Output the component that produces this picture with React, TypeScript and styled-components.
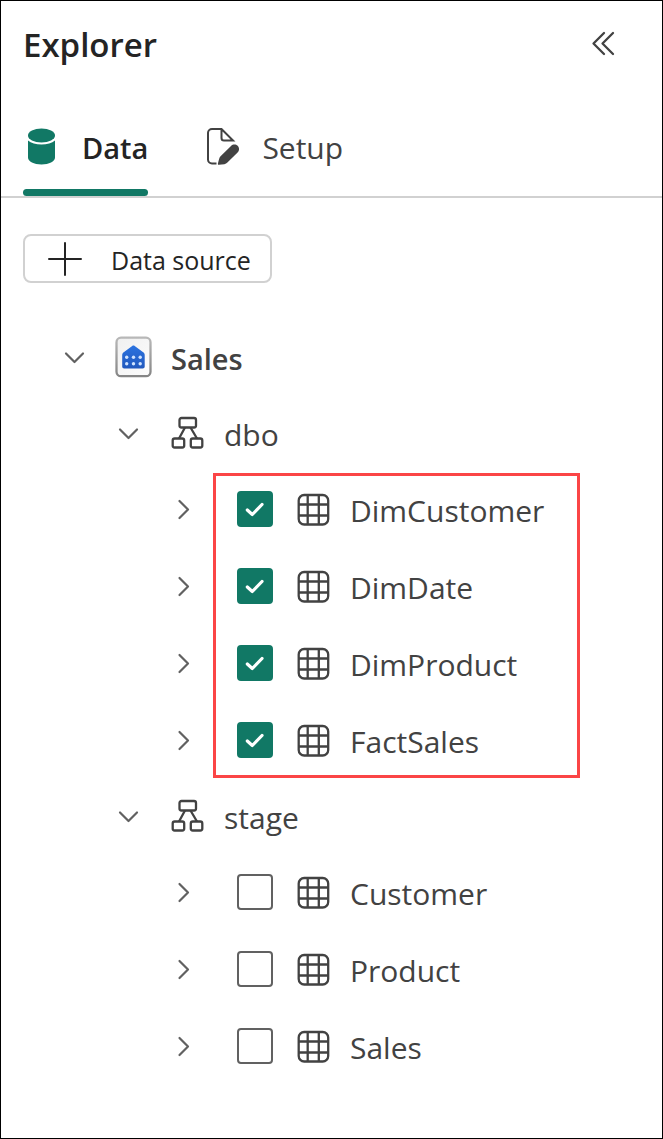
import React, { useState } from 'react';
import styled, { createGlobalStyle } from 'styled-components';

const GlobalStyle = createGlobalStyle`
  * { box-sizing: border-box; }
  body {
    margin: 0;
    background: #fff;
    color: #424242;
    font-family: "Segoe UI", "Open Sans", "Noto Sans", sans-serif;
    font-size: 30px;
    line-height: 40px;
  }
  button { font: inherit; color: inherit; background: none; border: 0; padding: 0; cursor: pointer; }
  ul { list-style: none; margin: 0; padding: 0; }
  svg { display: block; flex: none; }
`;

const Panel = styled.aside`
  min-height: 100vh;
  border: 1px solid #000;
`;

const Header = styled.header`
  display: flex;
  align-items: center;
  justify-content: space-between;
  height: 88px;
  margin-bottom: 9px;
  padding: 0 41px 4px 22px;
`;

const Title = styled.h1`
  margin: 0;
  padding-top: 4px;
  color: #242424;
  font-size: 33px;
  font-weight: 600;
`;

const TabBar = styled.div`
  display: flex;
  gap: 55px;
  height: 100px;
  padding: 0 22px;
  border-bottom: 2px solid #d1d1d1;
`;

const Tab = styled.button<{ $active: boolean }>`
  position: relative;
  display: flex;
  align-items: center;
  gap: 23px;
  color: ${(p) => (p.$active ? '#242424' : '#424242')};
  font-size: ${(p) => (p.$active ? 29 : 30)}px;
  font-weight: ${(p) => (p.$active ? 600 : 400)};

  &::after {
    content: '';
    position: absolute;
    left: 0;
    right: 0;
    bottom: 0;
    height: 7px;
    border-radius: 4px;
    background: ${(p) => (p.$active ? '#117865' : 'transparent')};
  }
`;

const Caption = styled.span`
  padding-top: 2px;
`;

const Toolbar = styled.div`
  padding: 36px 22px;
`;

const AddButton = styled.button`
  display: flex;
  align-items: center;
  gap: 29px;
  height: 49px;
  padding: 0 19px 0 23px;
  border: 2px solid #d1d1d1;
  border-radius: 8px;
  color: #242424;
  font-size: 25px;
`;

const TreeList = styled.ul`
  padding: 0 22px 0 58px;
`;

const Group = styled.ul`
  padding-left: 54px;
`;

const TableGroup = styled(Group)<{ $highlighted: boolean }>`
  position: relative;
  display: flex;
  flex-direction: column;
  gap: 1px;

  &::after {
    content: '';
    display: ${(p) => (p.$highlighted ? 'block' : 'none')};
    position: absolute;
    inset: 2px 60px 0 100px;
    border: 3px solid #fb4546;
    pointer-events: none;
  }
`;

const Row = styled.div`
  display: flex;
  align-items: center;
  height: 76px;
`;

const Toggle = styled.button`
  display: flex;
  justify-content: center;
  width: 32px;
  margin-right: 24px;
`;

const Name = styled.span<{ $strong?: boolean }>`
  margin-left: 19px;
  padding-top: 3px;
  font-size: ${(p) => (p.$strong ? 29 : 30)}px;
  font-weight: ${(p) => (p.$strong ? 600 : 400)};
`;

const CheckLabel = styled.label`
  display: flex;
  align-items: center;
  margin-left: 14px;
  cursor: pointer;
`;

const CheckBox = styled.span`
  display: grid;
  margin-right: 22px;

  > * { grid-area: 1 / 1; }
  svg { pointer-events: none; }
`;

const CheckInput = styled.input`
  appearance: none;
  width: 36px;
  height: 36px;
  margin: 0;
  border: 2px solid #616161;
  border-radius: 4px;
  background: #fff;
  cursor: pointer;

  &:checked {
    border-color: #117865;
    background: #117865;
  }
`;

interface IconProps {
  children: React.ReactNode;
  w?: number;
  h?: number;
  stroke?: number;
}

const Icon = ({ children, w = 36, h = 36, stroke = 2 }: IconProps) => (
  <svg width={w} height={h} viewBox={`0 0 ${w} ${h}`} fill="none" stroke="currentColor" strokeWidth={stroke} aria-hidden="true">
    {children}
  </svg>
);

const CollapseIcon = () => (
  <Icon stroke={2.3}>
    <path d="M19 8 8.500 18.500 19 29M28 8 17.500 18.500 28 29" strokeLinecap="round" strokeLinejoin="round" />
  </Icon>
);

const DatabaseIcon = () => (
  <Icon h={38}>
    <g fill="#117865" stroke="none">
      <path d="M5 12.500c3 2.700 8 4 13.500 4s10.500-1.300 13.500-4V29.500c0 4-6 7-13.500 7S5 33.500 5 29.500z" />
      <ellipse cx="18.500" cy="7.500" rx="13.500" ry="7" />
    </g>
  </Icon>
);

const SetupIcon = () => (
  <Icon h={38}>
    <path d="M13.500 35.500H9a4 4 0 0 1-4-4V5a4 4 0 0 1 4-4h9.500L30 12.500H21a2.500 2.500 0 0 1-2.500-2.500V1" />
    <path d="M16 36.800c-.8.200-1.300-.4-1.100-1.200l1.200-4.600c.3-1.200.9-2.200 1.700-3L28 17.900c1.900-1.900 4.900-1.900 6.700-.1s1.800 4.800-.1 6.700L24.400 34.600c-.8.800-1.800 1.400-3 1.700z" fill="currentColor" stroke="none" />
  </Icon>
);

const PlusIcon = () => (
  <Icon w={34} h={34}>
    <path d="M17 1v32M1 17h32" strokeLinecap="round" />
  </Icon>
);

const ChevronIcon = ({ open }: { open: boolean }) => (
  <Icon w={32} h={32} stroke={2.2}>
    <path d={open ? 'M7 12.500 15.500 21 24 12.500' : 'M12.500 8 21 16.500 12.500 25'} stroke="#616161" strokeLinecap="round" strokeLinejoin="round" />
  </Icon>
);

const WarehouseIcon = () => (
  <Icon w={37} h={42} stroke={2.3}>
    <defs>
      <linearGradient id="tile" x1="0" y1="0" x2="1" y2="1">
        <stop offset="0" stopColor="#f0f0f0" />
        <stop offset="1" stopColor="#fcfcfc" />
      </linearGradient>
      <linearGradient id="frame" x1="0" y1="0" x2="0" y2="1">
        <stop offset="0" stopColor="#b8b8b8" />
        <stop offset="1" stopColor="#858585" />
      </linearGradient>
      <linearGradient id="house" x1="0" y1="0" x2="0" y2="1">
        <stop offset="0" stopColor="#2b73e0" />
        <stop offset="1" stopColor="#2158bd" />
      </linearGradient>
    </defs>
    <rect x="1.500" y="1.700" width="34" height="38.500" rx="4.500" fill="url(#tile)" stroke="url(#frame)" />
    <path d="M17.200 10c.8-.6 1.700-.6 2.500 0l8.500 6.300c1 .8 1.500 1.700 1.500 3V30.500c0 1.200-.8 2-2 2h-18.500c-1.200 0-2-.8-2-2V19.300c0-1.300.5-2.200 1.500-3z" fill="url(#house)" stroke="none" />
    <g fill="#cfe3ff" stroke="none">
      {[11.7, 18.5, 25.2].map((x) => (
        <React.Fragment key={x}>
          <circle cx={x} cy="21.200" r="1.700" />
          <circle cx={x} cy="27.700" r="1.700" />
        </React.Fragment>
      ))}
    </g>
  </Icon>
);

const SchemaIcon = () => (
  <Icon stroke={2.3}>
    <rect x="10.500" y="3" width="16.500" height="9.500" rx="2" />
    <rect x="3.700" y="23.500" width="11.500" height="9" rx="2" />
    <rect x="21.800" y="23.500" width="11.500" height="9" rx="2" />
    <path d="M16 12.500 10 23.500M21.500 12.500 28 23.500" />
  </Icon>
);

const TableIcon = () => (
  <Icon stroke={2.3}>
    <rect x="3.700" y="4" width="29.500" height="29.500" rx="5.500" />
    <path d="M12.700 4v29.500M23.800 4v29.500M3.700 13.500h29.500M3.700 24.500h29.500" />
  </Icon>
);

const CheckIcon = () => (
  <Icon>
    <path d="M10.300 19 15.300 23.500 25 13.500" stroke="#fff" strokeWidth="3.200" strokeLinecap="round" strokeLinejoin="round" />
  </Icon>
);

const schemas = [
  { name: 'dbo', highlighted: true, tables: ['DimCustomer', 'DimDate', 'DimProduct', 'FactSales'] },
  { name: 'stage', highlighted: false, tables: ['Customer', 'Product', 'Sales'] },
];

const Expander = ({ open, name, onClick }: { open: boolean; name: string; onClick?: () => void }) => (
  <Toggle type="button" aria-expanded={open} aria-label={`${open ? 'Collapse' : 'Expand'} ${name}`} onClick={onClick}>
    <ChevronIcon open={open} />
  </Toggle>
);

const TableRow = ({ name, selected }: { name: string; selected: boolean }) => {
  const [checked, setChecked] = useState(selected);
  return (
    <Row as="li">
      <Expander open={false} name={name} />
      <CheckLabel>
        <CheckBox>
          <CheckInput type="checkbox" checked={checked} onChange={(e) => setChecked(e.target.checked)} />
          {checked && <CheckIcon />}
        </CheckBox>
        <TableIcon />
        <Name>{name}</Name>
      </CheckLabel>
    </Row>
  );
};

const SchemaNode = ({ name, highlighted, tables }: (typeof schemas)[number]) => {
  const [open, setOpen] = useState(true);
  return (
    <li>
      <Row>
        <Expander open={open} name={name} onClick={() => setOpen(!open)} />
        <SchemaIcon />
        <Name>{name}</Name>
      </Row>
      {open && (
        <TableGroup $highlighted={highlighted}>
          {tables.map((table) => (
            <TableRow key={table} name={table} selected={highlighted} />
          ))}
        </TableGroup>
      )}
    </li>
  );
};

export default function App() {
  const [tab, setTab] = useState('Data');
  const [open, setOpen] = useState(true);
  return (
    <>
      <GlobalStyle />
      <Panel>
        <Header>
          <Title>Explorer</Title>
          <button type="button" aria-label="Collapse explorer">
            <CollapseIcon />
          </button>
        </Header>
        <TabBar role="tablist">
          <Tab type="button" role="tab" aria-selected={tab === 'Data'} $active={tab === 'Data'} onClick={() => setTab('Data')}>
            <DatabaseIcon />
            <Caption>Data</Caption>
          </Tab>
          <Tab type="button" role="tab" aria-selected={tab === 'Setup'} $active={tab === 'Setup'} onClick={() => setTab('Setup')}>
            <SetupIcon />
            <Caption>Setup</Caption>
          </Tab>
        </TabBar>
        <Toolbar>
          <AddButton type="button">
            <PlusIcon />
            <Caption>Data source</Caption>
          </AddButton>
        </Toolbar>
        <TreeList>
          <li>
            <Row>
              <Expander open={open} name="Sales" onClick={() => setOpen(!open)} />
              <WarehouseIcon />
              <Name $strong>Sales</Name>
            </Row>
            {open && (
              <Group>
                {schemas.map((schema) => (
                  <SchemaNode key={schema.name} {...schema} />
                ))}
              </Group>
            )}
          </li>
        </TreeList>
      </Panel>
    </>
  );
}
